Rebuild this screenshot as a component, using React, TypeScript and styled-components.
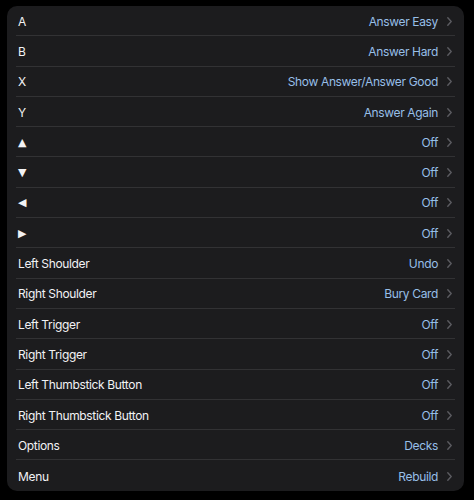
import React from "react";
import styled, { createGlobalStyle } from "styled-components";

const GlobalStyle = createGlobalStyle`
  html, body {
    margin: 0;
    padding: 0;
    background: #000;
  }
  body {
    font-family: Inter, "Noto Sans", "Liberation Sans", sans-serif;
    -webkit-font-smoothing: antialiased;
  }
`;

const rows: { label: string; value: string; glyph?: boolean }[] = [
  { label: "A", value: "Answer Easy" },
  { label: "B", value: "Answer Hard" },
  { label: "X", value: "Show Answer/Answer Good" },
  { label: "Y", value: "Answer Again" },
  { label: "▲", value: "Off", glyph: true },
  { label: "▼", value: "Off", glyph: true },
  { label: "◀", value: "Off", glyph: true },
  { label: "▶", value: "Off", glyph: true },
  { label: "Left Shoulder", value: "Undo" },
  { label: "Right Shoulder", value: "Bury Card" },
  { label: "Left Trigger", value: "Off" },
  { label: "Right Trigger", value: "Off" },
  { label: "Left Thumbstick Button", value: "Off" },
  { label: "Right Thumbstick Button", value: "Off" },
  { label: "Options", value: "Decks" },
  { label: "Menu", value: "Rebuild" },
];

const Page = () => {
  return (
    <Screen>
      <GlobalStyle />
      <Panel>
        {rows.map((row, i) => (
          <Row key={i}>
            <Inner last={i === rows.length - 1}>
              <Label glyph={row.glyph}>{row.label}</Label>
              <Value>{row.value}</Value>
              <Chevron width="5" height="9" viewBox="0 0 5 9">
                <path d="M0.8 0.8 L4.2 4.5 L0.8 8.2" fill="none" stroke="#5b5b60" strokeWidth="1.4" strokeLinecap="round" strokeLinejoin="round" />
              </Chevron>
            </Inner>
          </Row>
        ))}
      </Panel>
    </Screen>
  );
};

export default Page;

const Screen = styled.div`
  width: 474px;
  height: 500px;
  background: #000;
  padding: 6px 10px 10px 7px;
  box-sizing: border-box;
`;

const Panel = styled.div`
  background: #1c1c1e;
  border-radius: 10px;
  overflow: hidden;
`;

const Row = styled.div`
  height: 30.3px;
  padding: 0 9px;
  display: flex;
`;

const Inner = styled.div<{ last?: boolean }>`
  flex: 1;
  display: flex;
  align-items: center;
  padding: 1px 3px 0 2px;
  border-bottom: ${(p) => (p.last ? "none" : "1px solid #323234")};
`;

const Label = styled.span<{ glyph?: boolean }>`
  flex: 1;
  color: #f2f2f4;
  font-size: ${(p) => (p.glyph ? "11px" : "12px")};
  letter-spacing: ${(p) => (p.glyph ? "0" : "-0.35px")};
  font-family: ${(p) => (p.glyph ? '"DejaVu Sans", sans-serif' : "inherit")};
`;

const Value = styled.span`
  color: #97bfe8;
  font-size: 12px;
  letter-spacing: -0.35px;
  margin-right: 9px;
`;

const Chevron = styled.svg`
  display: block;
`;
